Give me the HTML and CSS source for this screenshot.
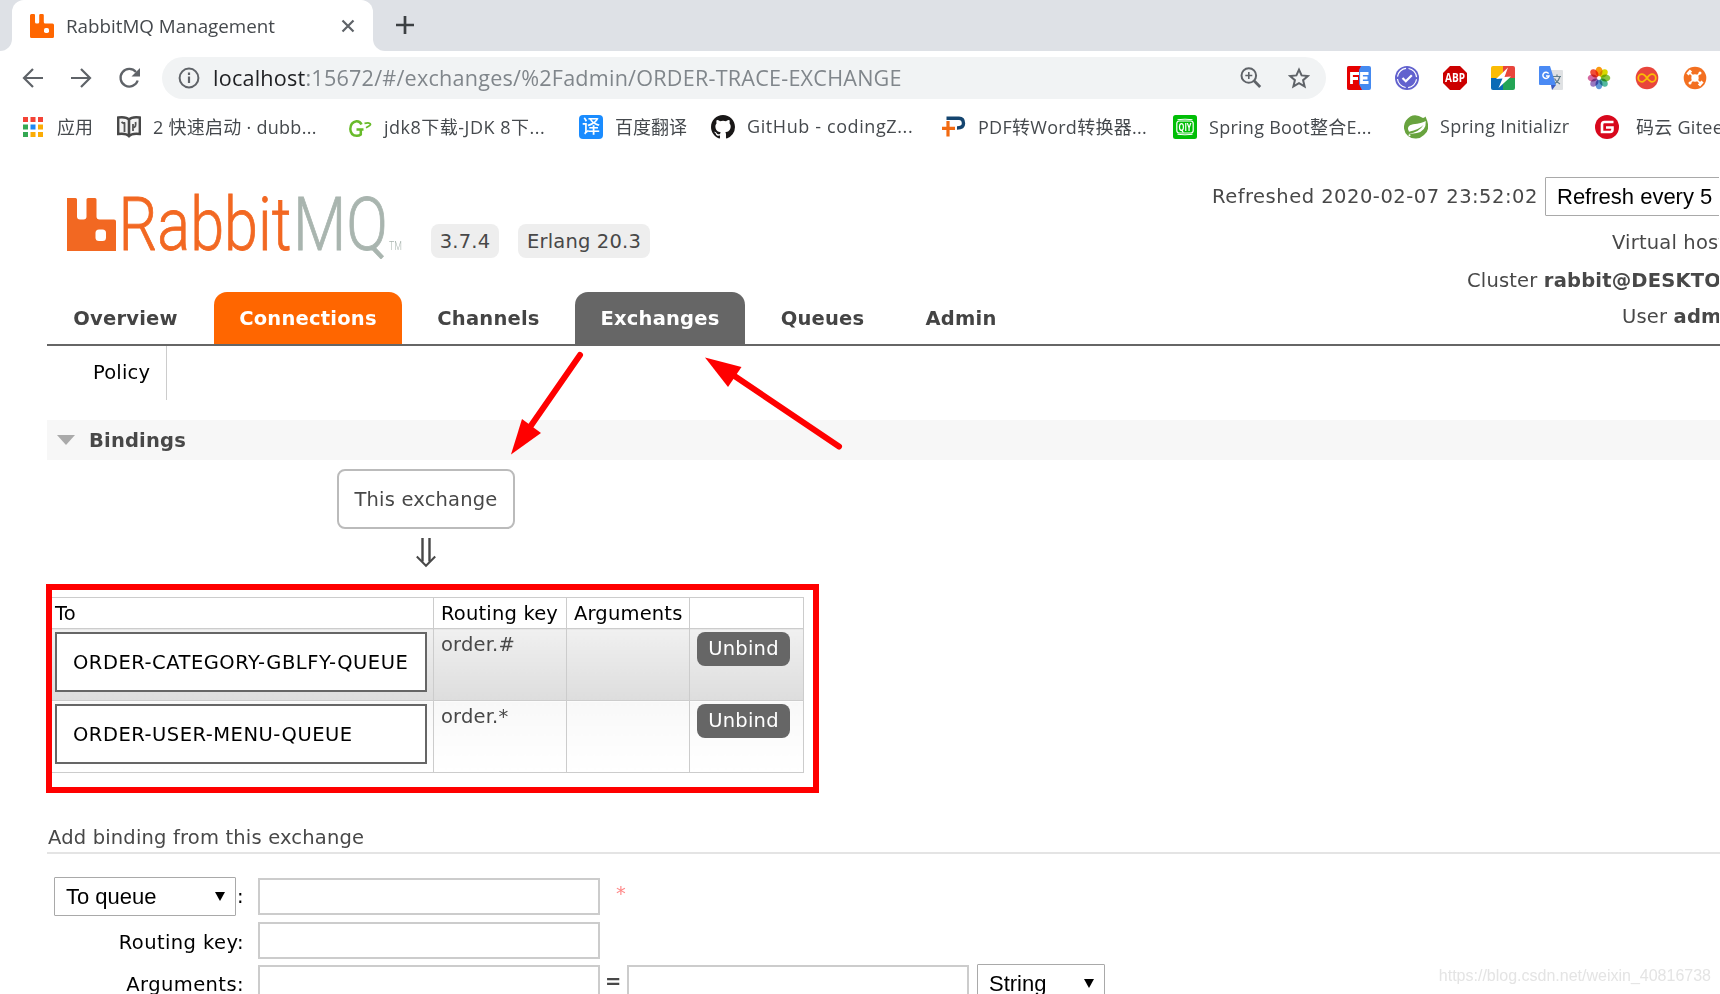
FILE: index.html
```
<!DOCTYPE html>
<html lang="zh-CN">
<head>
    <meta charset="UTF-8">
    <title>RabbitMQ Management</title>
    <link rel="stylesheet" href="styles.css">
</head>
<body>
    <div class="tabstrip">
        <div class="tab-edge left"></div>
        <div class="browser-tab">
            <svg class="favicon" width="24" height="24" viewBox="0 0 24 24"><path fill="#ff6600" d="M1.500 0h2.500q1 0 1 1.300V8q0 1.600 1.500 1.600h1.200q1.500 0 1.500-1.600V1.300Q9.200 0 10.500 0h2q1.300 0 1.300 1.300V8q0 1.600 1.500 1.600h7.200q1.500 0 1.500 1.500V22.500q0 1.500-1.500 1.500h-21Q0 24 0 22.500v-21Q0 0 1.500 0z"/><rect x="14" y="14" width="5" height="5" rx="1.800" fill="#fff"/></svg>
            <span class="tab-title">RabbitMQ Management</span>
            <svg class="tab-close" width="14" height="14" viewBox="0 0 14 14"><path d="M1.500 1.500l11 11M12.500 1.500l-11 11" stroke="#5f6368" stroke-width="2.200"/></svg>
        </div>
        <div class="tab-edge right"></div>
        <svg class="new-tab" width="18" height="18" viewBox="0 0 18 18"><path d="M9 0v18M0 9h18" stroke="#3c4043" stroke-width="2.700"/></svg>
    </div>

    <div class="toolbar">
        <svg width="22" height="22" viewBox="0 0 22 22" fill="none" stroke="#5f6368" stroke-width="2.200"><path d="M21 11H2.500M11 2L2 11l9 9"/></svg>
        <svg width="22" height="22" viewBox="0 0 22 22" fill="none" stroke="#5f6368" stroke-width="2.200"><path d="M1 11h18.500M11 2l9 9-9 9"/></svg>
        <svg width="22" height="22" viewBox="0 0 22 22"><path d="M19.700 13.500A8.800 8.800 0 1 1 18 5" fill="none" stroke="#5f6368" stroke-width="2.300"/><path d="M22 1v8.500h-8.500z" fill="#5f6368"/></svg>
        <div class="omnibox">
            <svg width="22" height="22" viewBox="0 0 22 22"><circle cx="11" cy="11" r="9.400" fill="none" stroke="#5f6368" stroke-width="2"/><path d="M11 9.500v6.500M11 5.500v2.400" stroke="#5f6368" stroke-width="2.200"/></svg>
            <span class="url"><b>localhost</b>:15672/#/exchanges/%2Fadmin/ORDER-TRACE-EXCHANGE</span>
            <svg class="zoom-icon" width="22" height="22" viewBox="0 0 22 22" fill="none" stroke="#5f6368"><circle cx="8.800" cy="8.500" r="7.300" stroke-width="2"/><path d="M8.800 5v7M5.300 8.500h7" stroke-width="1.600"/><path d="M13.800 13.500l6.400 6.400" stroke-width="2.800"/></svg>
            <svg width="22" height="22" viewBox="0 0 22 22"><path d="M11 2.600l2.600 5.800 6.300.6-4.800 4.200 1.500 6.200L11 16.100l-5.600 3.300 1.500-6.200L2.100 9l6.300-.6z" fill="none" stroke="#5f6368" stroke-width="2"/></svg>
        </div>
        <div class="extensions">
            <svg width="24" height="24" viewBox="0 0 24 24"><rect width="24" height="24" rx="2" fill="#458af0"/><path d="M2 0h12l-2 4v14l3 6H2q-2 0-2-2V2Q0 0 2 0z" fill="#e60000"/><path d="M4.500 18V7.500H12M4.500 12.500h6.500M21.500 7.500h-7v9h7M14.500 12h6" fill="none" stroke="#fff" stroke-width="2.800"/></svg>
            <svg width="24" height="24" viewBox="0 0 24 24"><circle cx="12" cy="12" r="12" fill="#6262ce"/><circle cx="12" cy="12" r="9.600" fill="none" stroke="#fff" stroke-width="1.200" stroke-dasharray="12.500 2.580" stroke-dashoffset="-1.300"/><path d="M7.500 12l3.300 3.200 6-6" fill="none" stroke="#fff" stroke-width="2.200"/></svg>
            <svg width="24" height="24" viewBox="0 0 24 24"><path d="M7 0h10l7 7v10l-7 7H7l-7-7V7z" fill="#cc0000"/><text x="12" y="16.300" class="abp" textLength="20" lengthAdjust="spacingAndGlyphs">ABP</text></svg>
            <svg width="24" height="24" viewBox="0 0 24 24"><path d="M2 0h10v12H0V2q0-2 2-2z" fill="#fbbc05"/><path d="M12 0h10q2 0 2 2v10H12z" fill="#e8453c"/><path d="M0 12h12v12H2q-2 0-2-2z" fill="#0a6ab6"/><path d="M12 12h12v10q0 2-2 2H12z" fill="#23a455"/><path d="M17 1.500L5 13l6.500-.5L7.500 22 20 10.500l-6.500.5z" fill="#fff"/></svg>
            <svg width="24" height="24" viewBox="0 0 24 24"><path d="M9 4h14q1 0 1 1v18q0 1-1 1H13z" fill="#dfe1e3"/><path d="M12 19h5l-4 5z" fill="#3a5bc0"/><path d="M1 0h10l6 19H1q-1 0-1-1V1q0-1 1-1z" fill="#4a8af4"/><path d="M14 10.500h8M18 8.500v2M21 10.500q-1 4-5 7M15.500 12.500q2 4 5.500 5.500" stroke="#607d8b" stroke-width="1.200" fill="none"/><path d="M9.600 7.600A3.100 3.100 0 1 0 10 10H7" fill="none" stroke="#fff" stroke-width="1.500"/></svg>
            <svg class="petals" width="24" height="24" viewBox="-12 -12 24 24"><ellipse cy="-6.500" rx="3.500" ry="4.800" fill="#fb9a10"/><ellipse cy="-6.500" rx="3.500" ry="4.800" fill="#d8d800" transform="rotate(45)"/><ellipse cy="-6.500" rx="3.500" ry="4.800" fill="#86c440" transform="rotate(90)"/><ellipse cy="-6.500" rx="3.500" ry="4.800" fill="#52b89e" transform="rotate(135)"/><ellipse cy="-6.500" rx="3.500" ry="4.800" fill="#6098d8" transform="rotate(180)"/><ellipse cy="-6.500" rx="3.500" ry="4.800" fill="#9878c0" transform="rotate(225)"/><ellipse cy="-6.500" rx="3.500" ry="4.800" fill="#d468a0" transform="rotate(270)"/><ellipse cy="-6.500" rx="3.500" ry="4.800" fill="#f04c38" transform="rotate(315)"/></svg>
            <svg width="24" height="24" viewBox="0 0 24 24"><circle cx="12" cy="12" r="11.300" fill="#e8453c"/><path d="M12 12c-2-2.600-3.300-3.800-5-3.800a3.800 3.800 0 0 0 0 7.600c1.700 0 3-1.200 5-3.800s3.300-3.800 5-3.800a3.800 3.800 0 0 1 0 7.600c-1.700 0-3-1.200-5-3.800z" fill="none" stroke="#fbbc05" stroke-width="1.800"/></svg>
            <svg width="24" height="24" viewBox="0 0 24 24"><circle cx="12" cy="12" r="11.300" fill="#f37021"/><circle cx="12" cy="12" r="3.700" fill="#fff"/><path d="M7 7l10 10M17 7L7 17" stroke="#fff" stroke-width="1.600"/><path d="M4.500 8.500l3.500-4M16 19.500l3.500-4" stroke="#fff" stroke-width="3"/><circle cx="17" cy="7" r="1.500" fill="#fff"/><circle cx="7" cy="17" r="1.500" fill="#fff"/></svg>
        </div>
    </div>

    <div class="bookmarks">
        <div class="bookmark apps">
            <svg width="20" height="20" viewBox="0 0 20 20"><path d="M0 0h5v5H0zM7.500 0h5v5h-5zM15 0h5v5h-5z" fill="#f44336"/><path d="M0 7.500h5v5H0zM0 15h5v5H0z" fill="#34a853"/><path d="M7.500 7.500h5v5h-5z" fill="#1e88f5"/><path d="M15 7.500h5v5h-5zM7.500 15h5v5h-5zM15 15h5v5h-5z" fill="#fbac05"/></svg>
            <span>应用</span>
        </div>
        <div class="bookmark">
            <svg width="24" height="24" viewBox="0 0 24 24"><path d="M1.200 2.500q8-1 10.800 2 2.800-3 10.800-2V19q-8-1-10.800 2.200Q9.200 18 1.200 19z" fill="#f4f4f4" stroke="#484848" stroke-width="2.400"/><path d="M12 4v17" stroke="#484848" stroke-width="2.600"/><path d="M7.500 8v9M4.500 7q3 2.500 3 0M16 16V9M16 12.500q3.500 0 2.500-5.500" stroke="#555" stroke-width="1.800" fill="none"/></svg>
            <span>2 快速启动 · dubb...</span>
        </div>
        <div class="bookmark jdk">
            <svg width="24" height="24" viewBox="0 0 24 24"><path d="M13.500 9.500Q12 6 8.500 6.200 2.500 7 2.300 14q.2 6.500 6.500 6.800 2.500 0 4-1.300V14.500M8.500 14.500h7" fill="none" stroke="#68bb2a" stroke-width="2.500"/><path d="M16.500 8.300q6-1 6 .9 0 1.300-4.500 3.500" fill="none" stroke="#68bb2a" stroke-width="1.800"/></svg>
            <span>jdk8下载-JDK 8下...</span>
        </div>
        <div class="bookmark">
            <div class="fanyi">译</div>
            <span class="cjk">百度翻译</span>
        </div>
        <div class="bookmark github">
            <svg width="24" height="24" viewBox="0 0 16 16"><path fill="#191717" d="M8 0C3.580 0 0 3.580 0 8c0 3.540 2.290 6.530 5.470 7.590.4.070.55-.17.55-.38 0-.19-.01-.82-.01-1.490-2.010.37-2.530-.49-2.690-.94-.09-.23-.48-.94-.82-1.130-.28-.15-.68-.52-.01-.53.63-.01 1.080.58 1.230.82.72 1.210 1.870.87 2.330.66.070-.52.28-.87.51-1.070-1.780-.2-3.640-.89-3.640-3.950 0-.87.31-1.590.82-2.150-.08-.2-.36-1.020.08-2.120 0 0 .67-.21 2.200.82a7.600 7.600 0 0 1 4 0c1.530-1.040 2.200-.82 2.200-.82.44 1.100.16 1.920.08 2.120.51.56.82 1.270.82 2.150 0 3.070-1.870 3.750-3.650 3.950.29.25.54.73.54 1.480 0 1.070-.01 1.930-.01 2.200 0 .21.15.46.55.38A8.010 8.010 0 0 0 16 8c0-4.420-3.580-8-8-8z"/></svg>
            <span>GitHub - codingZ...</span>
        </div>
        <div class="bookmark pdf">
            <svg width="24" height="24" viewBox="0 0 24 24"><path d="M4.500 3.200H17q4.500 0 4.500 5.300 0 4.500-6.500 4.500" fill="none" stroke="#14456f" stroke-width="3.400"/><path d="M6 6v15.500M0 13.300h13" stroke="#f26a11" stroke-width="3.200"/></svg>
            <span>PDF转Word转换器...</span>
        </div>
        <div class="bookmark">
            <svg width="24" height="24" viewBox="0 0 24 24"><rect width="24" height="24" rx="2.500" fill="#00be06"/><rect x="3.800" y="6" width="16.400" height="12" rx="2.500" fill="none" stroke="#fff" stroke-width="1.200"/><path d="M4.500 4.700q7.500-1 15 0M4.500 19.300q7.500 1 15 0" fill="none" stroke="#fff"/><text x="12" y="15.800" class="qiy" textLength="13" lengthAdjust="spacingAndGlyphs">QIY</text></svg>
            <span>Spring Boot整合E...</span>
        </div>
        <div class="bookmark">
            <svg width="24" height="24" viewBox="0 0 24 24"><path d="M21.500 1.500q6 13-1.500 18.500A12 12 0 0 1 4 21 11.800 11.800 0 0 1 2 5.500Q9-3.500 19 3q1.500-.3 2.500-1.500z" fill="#68a33e"/><path d="M21.800 6q.5 10-9 12-4 1-8.300.8Q15 17.500 19.500 10 15 14.500 5 16.800 1.500 11 9 9.300q9-1 12.800-3.300z" fill="#fff"/><circle cx="5.500" cy="20.300" r="1" fill="#fff"/></svg>
            <span>Spring Initializr</span>
        </div>
        <div class="bookmark gitee">
            <svg width="24" height="24" viewBox="0 0 24 24"><circle cx="12" cy="12" r="12" fill="#d8081c"/><path d="M18.500 7H9.500Q7 7 7 9.500V17h8q2.500 0 2.500-2.500v-2H11" fill="none" stroke="#fff" stroke-width="2.600"/></svg>
            <span>码云 Gitee</span>
        </div>
    </div>

    <div class="page">
        <div class="header">
            <svg class="logo" width="340" height="66" viewBox="0 0 340 66">
                <path fill="#f26822" d="M0 5h8.500q1.500 0 1.500 1.500v17q0 3 3 3h3.500q3 0 3-3v-17Q19.500 5 21 5h7q1.500 0 1.500 1.500v17q0 3 3 3H47q2 0 2 2V58H0z"/>
                <rect x="28.500" y="36.500" width="10.500" height="11.500" rx="3.500" fill="#fff"/>
                <text class="logo-rabbit" x="51.500" y="57" textLength="173" lengthAdjust="spacingAndGlyphs">Rabbit</text>
                <text class="logo-mq" x="226" y="57" textLength="95" lengthAdjust="spacingAndGlyphs">MQ</text>
                <text class="logo-tm" x="322" y="57" textLength="13" lengthAdjust="spacingAndGlyphs">TM</text>
            </svg>
            <span class="version">3.7.4</span>
            <span class="version erlang">Erlang 20.3</span>
            <div class="status">
                <div class="refresh"><span>Refreshed 2020-02-07 23:52:02</span><div class="select">Refresh every 5 seconds</div></div>
                <div class="vhost">Virtual host</div>
                <div class="cluster">Cluster <b>rabbit@DESKTOP</b></div>
                <div class="user">User <b>admin</b></div>
            </div>
        </div>

        <div class="menu">
            <a class="overview">Overview</a>
            <a class="connections">Connections</a>
            <a class="channels">Channels</a>
            <a class="exchanges">Exchanges</a>
            <a class="queues">Queues</a>
            <a class="admin">Admin</a>
        </div>
        <div class="rhs"><a>Policy</a></div>

        <h2><i class="triangle"></i>Bindings</h2>

        <div class="bindings">
            <div class="this-exchange">This exchange</div>
            <svg class="down" width="20" height="30" viewBox="0 0 20 30"><path d="M6.500 0v23.500M13.500 0v23.500" stroke="#484848" stroke-width="2.400"/><path d="M.8 18.500l9.200 9.300 9.200-9.300" fill="none" stroke="#484848" stroke-width="2"/></svg>
        </div>

        <div class="table-wrap">
            <table>
                <tr><th class="to">To</th><th class="key">Routing key</th><th class="args">Arguments</th><th class="act"></th></tr>
                <tr class="alt1"><td><a class="queue">ORDER-CATEGORY-GBLFY-QUEUE</a></td><td>order.#</td><td></td><td><button>Unbind</button></td></tr>
                <tr class="alt2"><td><a class="queue">ORDER-USER-MENU-QUEUE</a></td><td>order.*</td><td></td><td><button>Unbind</button></td></tr>
            </table>
            <div class="highlight"></div>
        </div>

        <h3>Add binding from this exchange</h3>
        <div class="form">
            <div class="form-row">
                <div class="label"><div class="select to-queue">To queue<i></i></div>:</div>
                <div class="input"></div>
                <span class="mand">*</span>
            </div>
            <div class="form-row">
                <div class="label key-label">Routing key:</div>
                <div class="input"></div>
            </div>
            <div class="form-row">
                <div class="label args-label">Arguments:</div>
                <div class="input"></div>
                <span class="eq">=</span>
                <div class="input"></div>
                <div class="select type">String<i></i></div>
            </div>
        </div>
    </div>

    <svg class="arrows" width="1720" height="994" viewBox="0 0 1720 994">
        <g stroke="#ff0000" stroke-width="6" stroke-linecap="round"><path d="M580 355L530 427"/><path d="M839 446.500L733 375"/></g>
        <path d="M511 454.500L522 419 541 433z" fill="#ff0000"/>
        <path d="M705 357.500L741.500 367 728 387z" fill="#ff0000"/>
    </svg>
    <div class="watermark">https://blog.csdn.net/weixin_40816738</div>
</body>
</html>
```
FILE: styles.css
```
* {
    box-sizing: border-box;
}
html {
    height: 994px;
    overflow: hidden;
}
body {
    margin: 0;
    width: 1720px;
    height: 994px;
    overflow: hidden;
    position: relative;
    background-color: #ffffff;
    color: #484848;
    font-family: "DejaVu Sans", Verdana, sans-serif;
    font-size: 19.5px;
    letter-spacing: 0.18px;
    white-space: nowrap;
}
svg {
    display: block;
    flex: none;
}

/* browser */
.tabstrip {
    display: flex;
    height: 51px;
    background-color: #dee1e6;
    font-family: "Open Sans", "Noto Sans CJK SC", sans-serif;
    letter-spacing: 0;
}
.tab-edge {
    width: 12px;
    background-color: #ffffff;
}
.tab-edge::before {
    content: "";
    display: block;
    height: 51px;
    background-color: #dee1e6;
}
.tab-edge.left::before {
    border-bottom-right-radius: 12px;
}
.tab-edge.right::before {
    border-bottom-left-radius: 12px;
}
.browser-tab {
    display: flex;
    align-items: center;
    width: 361px;
    padding: 0 18px;
    border-radius: 12px 12px 0 0;
    background-color: #ffffff;
}
.tab-title {
    margin-left: 12px;
    flex: 1;
    font-size: 18.8px;
    color: #45494d;
}
.new-tab {
    margin: 16px 0 0 11px;
}
.toolbar {
    display: flex;
    align-items: center;
    height: 54px;
    padding-left: 22px;
    gap: 26px;
}
.omnibox {
    display: flex;
    align-items: center;
    width: 1164px;
    height: 42px;
    margin-left: -4px;
    padding: 0 16px;
    border-radius: 21px;
    background-color: #f1f3f4;
    font-family: "Open Sans", sans-serif;
    font-size: 21.6px;
    letter-spacing: 0.22px;
    color: #80868b;
}
.url {
    flex: 1;
    margin-left: 13px;
    padding-bottom: 2px;
}
.url b {
    font-weight: normal;
    color: #202124;
}
.zoom-icon {
    margin-right: 26px;
}
.extensions {
    display: flex;
    gap: 24px;
    margin-left: -5px;
}
.petals ellipse {
    mix-blend-mode: multiply;
}
.abp, .qiy {
    font-family: "Open Sans", sans-serif;
    font-weight: bold;
    font-size: 11.5px;
    letter-spacing: 0;
    fill: #ffffff;
    text-anchor: middle;
}
.qiy {
    font-size: 10px;
}
.bookmarks {
    display: grid;
    grid-template-columns: 94px 231px 231px 132px 231px 231px 231px 191px 200px;
    height: 43px;
    padding-left: 23px;
    font-family: "Open Sans", "Noto Sans CJK SC", sans-serif;
    font-size: 18px;
    letter-spacing: 0.27px;
    color: #45494d;
}
.bookmark {
    display: flex;
    align-items: center;
    gap: 12px;
}
.bookmark span {
    padding-bottom: 2px;
}
.apps {
    gap: 14px;
    letter-spacing: 0;
}
.cjk {
    letter-spacing: 0;
}
.jdk {
    letter-spacing: 0.5px;
}
.github {
    letter-spacing: 0.6px;
}
.gitee {
    gap: 17px;
}
.fanyi {
    width: 24px;
    height: 24px;
    border-radius: 4px;
    background-color: #1a8cff;
    color: #ffffff;
    font-size: 18px;
    font-weight: 500;
    letter-spacing: 0;
    line-height: 22px;
    text-align: center;
}

/* management page */
.header {
    display: flex;
    align-items: flex-start;
    height: 144px;
    padding: 45px 0 0 67px;
}
.logo text {
    font-family: Roboto, sans-serif;
    font-weight: 300;
    font-size: 74px;
    letter-spacing: 0;
}
.logo .logo-rabbit {
    fill: #f26822;
    stroke: #f26822;
    stroke-width: 0.8px;
}
.logo .logo-mq {
    fill: #a9b5af;
    stroke: #a9b5af;
    stroke-width: 0.8px;
}
.logo .logo-tm {
    font-size: 13px;
    fill: #a9b5af;
}
.version {
    width: 68px;
    height: 34px;
    margin: 31px 0 0 24px;
    border-radius: 8px;
    background-color: #eeeeee;
    line-height: 36px;
    text-align: center;
}
.erlang {
    width: 132px;
    margin-left: 19px;
}
.status {
    width: 507px;
    margin-left: 562px;
    margin-top: -16px;
    overflow: hidden;
}
.status > div {
    height: 36px;
    line-height: 36px;
}
.status .refresh {
    display: flex;
    height: 48px;
    line-height: 40px;
}
.refresh span {
    flex: none;
    width: 333px;
    letter-spacing: 0.5px;
}
.select {
    height: 39px;
    padding-left: 11px;
    border: 1px solid #a9a9a9;
    border-radius: 1px;
    background-color: #ffffff;
    color: #000000;
    font-family: "Liberation Sans", Arial, sans-serif;
    font-size: 22px;
    letter-spacing: 0;
    line-height: 37px;
}
.refresh .select {
    width: 300px;
    flex: none;
}
.status .vhost {
    padding-left: 400px;
}
.status .cluster {
    height: 38px;
    line-height: 40px;
    padding-left: 255px;
}
.status .user {
    padding-left: 410px;
}
.menu {
    display: flex;
    gap: 10px;
    height: 54px;
    margin-left: 47px;
    border-bottom: 2px solid #666666;
}
.menu a {
    height: 52px;
    line-height: 54px;
    border-radius: 13px 13px 0 0;
    text-align: center;
    font-weight: bold;
    letter-spacing: 0.22px;
    color: #444444;
}
.menu .overview {
    width: 157px;
}
.menu .connections {
    width: 188px;
    background-color: #ff6600;
    color: #ffffff;
}
.menu .channels {
    width: 153px;
}
.menu .exchanges {
    width: 170px;
    background-color: #666666;
    color: #ffffff;
}
.menu .queues {
    width: 135px;
}
.menu .admin {
    width: 122px;
}
.rhs {
    display: flex;
    height: 74px;
    margin-left: 47px;
}
.rhs a {
    width: 120px;
    height: 54px;
    padding-left: 46px;
    border-right: 1px solid #cccccc;
    line-height: 53px;
    color: #000000;
}
h2 {
    display: flex;
    align-items: center;
    height: 40px;
    margin: 0 0 0 47px;
    padding-left: 10px;
    background-color: #f7f7f7;
    font-size: 19.5px;
}
.triangle {
    margin-right: 14px;
    border: 9.5px solid transparent;
    border-top: 10px solid #aaaaaa;
    border-bottom: 0;
}
.bindings {
    display: flex;
    flex-direction: column;
    align-items: center;
    width: 758px;
    height: 137px;
    margin-left: 47px;
    padding: 9px 0 0;
}
.this-exchange {
    width: 178px;
    height: 60px;
    border: 2px solid #bbbbbb;
    border-radius: 8px;
    line-height: 57px;
    text-align: center;
}
.down {
    margin-top: 9px;
}
.table-wrap {
    position: relative;
    width: 757px;
    margin-left: 47px;
}
table {
    width: 757px;
    table-layout: fixed;
    border-collapse: collapse;
}
th, td {
    height: 72px;
    padding: 3px 7px;
    border: 1px solid #cccccc;
    text-align: left;
    vertical-align: top;
    line-height: 26px;
}
th {
    height: 31px;
    padding-bottom: 2px;
    line-height: 25px;
    font-weight: normal;
    color: #000000;
}
.to {
    width: 386px;
}
.key {
    width: 133px;
}
.args {
    width: 123px;
}
.alt1 td {
    background: linear-gradient(#f0f0f0, #dddddd);
}
.alt2 td {
    background: linear-gradient(#f8f8f8, #ffffff);
}
.queue {
    display: block;
    width: 372px;
    height: 60px;
    padding-left: 16px;
    border: 2px solid #666666;
    background-color: #ffffff;
    color: #000000;
    letter-spacing: 0.5px;
    line-height: 57px;
}
table button {
    display: block;
    width: 93px;
    height: 34px;
    padding: 0;
    border: 0;
    border-radius: 8px;
    background-color: #666666;
    color: #ffffff;
    font: inherit;
    letter-spacing: 0.25px;
}
.highlight {
    position: absolute;
    left: -1px;
    top: -13px;
    width: 773px;
    height: 209px;
    border: 6px solid #ff0000;
}
h3 {
    height: 43px;
    margin: 38px 0 23px 47px;
    padding-left: 1px;
    border-bottom: 2px solid #e4e4e4;
    font-size: 19.5px;
    font-weight: normal;
    line-height: 54px;
}
.form {
    color: #000000;
    margin-left: 54px;
    letter-spacing: 0.42px;
}
.form-row {
    display: flex;
    height: 44px;
    align-items: flex-start;
}
.form-row + .form-row + .form-row {
    margin-top: -1px;
}
.label {
    display: flex;
    justify-content: flex-end;
    width: 190px;
    margin-right: 14px;
    line-height: 40px;
}
.key-label {
    line-height: 43px;
}
.args-label {
    line-height: 42px;
}
.label .select {
    margin-right: 1px;
}
.to-queue {
    width: 182px;
}
.select i {
    float: right;
    margin: 14px 10px 0 0;
    border: 5px solid transparent;
    border-top: 9px solid #000000;
    border-bottom: 0;
}
.input {
    width: 342px;
    height: 37px;
    margin-top: 1px;
    border: 2px solid #cccccc;
}
.mand {
    margin-left: 16px;
    line-height: 33px;
    color: #ff8888;
}
.eq {
    width: 27px;
    line-height: 36px;
    font-weight: bold;
    text-align: center;
    color: #484848;
}
.type {
    width: 128px;
    margin-left: 8px;
}

/* annotations */
.arrows {
    position: absolute;
    left: 0;
    top: 0;
}
.watermark {
    position: absolute;
    right: 9px;
    bottom: 9px;
    font-family: "Liberation Sans", Arial, sans-serif;
    font-size: 16px;
    letter-spacing: 0;
    color: #e4e4e4;
}
```
